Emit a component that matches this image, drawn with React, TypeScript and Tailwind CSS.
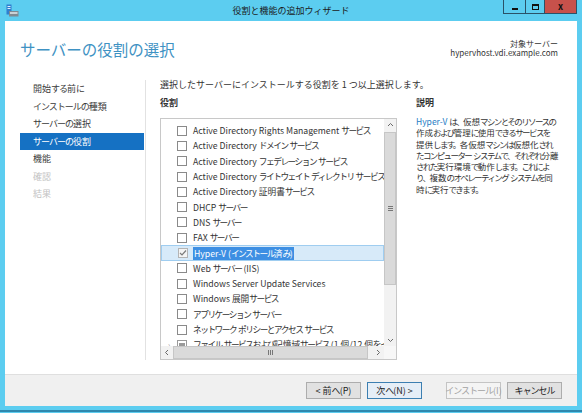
const roles: { label: string; state: "off" | "on" | "partial"; selected?: boolean; expander?: boolean }[] = [
  { label: "Active Directory Rights Management サービス", state: "off" },
  { label: "Active Directory ドメイン サービス", state: "off" },
  { label: "Active Directory フェデレーション サービス", state: "off" },
  { label: "Active Directory ライトウェイト ディレクトリ サービス", state: "off" },
  { label: "Active Directory 証明書サービス", state: "off" },
  { label: "DHCP サーバー", state: "off" },
  { label: "DNS サーバー", state: "off" },
  { label: "FAX サーバー", state: "off" },
  { label: "Hyper-V (インストール済み)", state: "on", selected: true },
  { label: "Web サーバー (IIS)", state: "off" },
  { label: "Windows Server Update Services", state: "off" },
  { label: "Windows 展開サービス", state: "off" },
  { label: "アプリケーション サーバー", state: "off" },
  { label: "ネットワーク ポリシーとアクセス サービス", state: "off" },
  { label: "ファイル サービスおよび記憶域サービス (1 個/12 個をインストール済み)", state: "partial", expander: true },
];

const steps: { label: string; active?: boolean; disabled?: boolean }[] = [
  { label: "開始する前に" },
  { label: "インストールの種類" },
  { label: "サーバーの選択" },
  { label: "サーバーの役割", active: true },
  { label: "機能" },
  { label: "確認", disabled: true },
  { label: "結果", disabled: true },
];

const descLines = [
  "作成および管理に使用できるサービスを",
  "提供します。各仮想マシンは仮想化され",
  "たコンピューター システムで、それぞれ分離",
  "された実行環境で動作します。これによ",
  "り、複数のオペレーティング システムを同",
  "時に実行できます。",
];

// the screenshot's UI font has narrow kana; squeeze only the kana runs
const tight = {
  list: "tracking-[-1.5px]",
  desc: "tracking-[-1.6px]",
  nav: "tracking-[-1px]",
};

function Jp({ text, fit }: { text: string; fit: keyof typeof tight }) {
  const parts = text.split(/([\u3000-\u30ff]+)/);
  return (
    <>
      {parts.map((p, i) =>
        i % 2 === 1 ? (
          <span key={i} className={tight[fit]}>
            {p}
          </span>
        ) : (
          p
        ),
      )}
    </>
  );
}

function AppIcon() {
  return (
    <svg width="13" height="13" viewBox="0 0 13 13">
      <rect x="0.5" y="0.5" width="5" height="10" fill="#2f7fcf" />
      <rect x="1.5" y="2" width="3" height="1" fill="#dff0ff" />
      <rect x="1.5" y="4" width="3" height="1" fill="#dff0ff" />
      <rect x="3" y="7" width="9.5" height="5.5" fill="#7f8a92" />
      <rect x="4" y="8" width="7.5" height="2" fill="#c9d1d6" />
    </svg>
  );
}

function Chevron({ dir }: { dir: "up" | "down" | "left" | "right" }) {
  const d = {
    up: "M1 4 L3.5 1.5 L6 4",
    down: "M1 2 L3.5 4.5 L6 2",
    left: "M4 1 L1.5 3.5 L4 6",
    right: "M2 1 L4.5 3.5 L2 6",
  }[dir];
  return (
    <svg width="7" height="7" viewBox="0 0 7 7">
      <path d={d} fill="none" stroke="#6a6a6a" strokeWidth="1" />
    </svg>
  );
}

function Checkbox({ state }: { state: "off" | "on" | "partial" }) {
  if (state === "on") {
    return (
      <span className="flex h-[10px] w-[10px] shrink-0 items-center justify-center border border-[#b4b4b4] bg-[#f4f4f4]">
        <svg width="8" height="8" viewBox="0 0 8 8">
          <path d="M1 4 L3 6 L7 1.5" fill="none" stroke="#7b7b7b" strokeWidth="1.2" />
        </svg>
      </span>
    );
  }
  if (state === "partial") {
    return (
      <span className="flex h-[10px] w-[10px] shrink-0 items-center justify-center border border-[#9a9a9a] bg-white">
        <span className="h-[4px] w-[6px] bg-[#9a9a9a]" />
      </span>
    );
  }
  return <span className="h-[10px] w-[10px] shrink-0 border border-[#8a8a8a] bg-white" />;
}

function Button({ children, kind }: { children: string; kind?: "default" | "disabled" }) {
  const tone =
    kind === "default"
      ? "border-[#3c7fb1] bg-[#e5eef7] text-[#222]"
      : kind === "disabled"
        ? "border-[#c4c4c4] bg-[#f4f4f4] text-[#a2a2a2]"
        : "border-[#adadad] bg-[#e1e1e1] text-[#222]";
  return (
    <div className={`flex h-[17px] w-[55px] items-center justify-center whitespace-pre border text-[9px] ${tone}`}>
      <Jp text={children} fit="nav" />
    </div>
  );
}

export default function App() {
  return (
    <div className="flex h-[413px] w-[582px] flex-col bg-[#5ccdf0] font-['Noto_Sans_CJK_JP',sans-serif] text-[#333]">
      {/* title bar */}
      <div className="grid h-[21px] shrink-0 grid-cols-[1fr_auto_1fr] px-[5px]">
        <div className="pl-[1px] pt-[4px]">
          <AppIcon />
        </div>
        <div className="self-center text-[9px] leading-none text-[#1b1b1b]">役割と機能の追加ウィザード</div>
        <div className="flex justify-end">
          <div className="flex h-[14px] border-x border-b border-[#2a5268]">
            <div className="flex w-[21px] items-end justify-center pb-[3px]">
              <span className="h-[2px] w-[6px] bg-[#111]" />
            </div>
            <div className="flex w-[19px] items-center justify-center border-l border-[#2a5268]">
              <span className="h-[6px] w-[7px] border border-t-2 border-[#111]" />
            </div>
            <div className="flex w-[32px] items-center justify-center border-l border-[#2a5268] bg-[#c7514b] text-[9px] font-bold leading-none text-[#111]">
              x
            </div>
          </div>
        </div>
      </div>

      {/* window body */}
      <div className="mx-[5px] flex h-[385px] shrink-0 flex-col bg-white">
        <div className="flex h-[58px] shrink-0 justify-between pl-[15px] pr-[19px] pt-[18px]">
          <div className="pt-[1px] text-[15.5px] leading-[18px] text-[#3f92c3]">サーバーの役割の選択</div>
          <div className="text-right text-[8px] leading-[9px] text-[#333]">
            <div>対象サーバー</div>
            <div>hypervhost.vdi.example.com</div>
          </div>
        </div>

        <div className="flex flex-1">
          <nav className="w-[140px] shrink-0 pl-[15px] pt-[1px]">
            {steps.map((s) => (
              <div
                key={s.label}
                className={`h-[17.5px] w-[124px] pl-[13px] text-[9px] leading-[17.5px] ${
                  s.active ? "bg-[#1571c3] text-white" : s.disabled ? "text-[#c3c3c3]" : "text-[#3a3a3a]"
                }`}
              >
                <Jp text={s.label} fit="nav" />
              </div>
            ))}
          </nav>
          <div className="mt-[1px] h-[280px] w-px bg-[#e2e2e2]" />

          <div className="flex flex-col pl-[14px]">
            <div className="text-[9px] leading-[12px] text-[#333]">
              選択したサーバーにインストールする役割を 1 つ以上選択します。
            </div>
            <div className="mt-[6px] flex">
              <div className="w-[237px]">
                <div className="text-[9px] font-bold leading-[12px] text-[#333]">役割</div>
                <div className="mt-[9px] flex h-[242px] flex-col border border-[#c8c8c8]">
                  <div className="flex h-[227px]">
                    <div className="flex-1 overflow-hidden pt-[4px]">
                      {roles.map((r) => (
                        <div
                          key={r.label}
                          className={`flex h-[15.3px] items-center whitespace-nowrap text-[8.7px] ${
                            r.selected ? "border border-[#9fcdf0] bg-[#d7eaf9]" : ""
                          }`}
                        >
                          <span className="flex w-[16px] shrink-0 justify-center text-[7px] leading-none text-[#999]">
                            {r.expander ? "›" : ""}
                          </span>
                          <Checkbox state={r.state} />
                          <span
                            className={`ml-[5px] px-[1px] leading-[13px] ${
                              r.selected ? "bg-[#3d8fe3] text-white" : "text-[#333]"
                            }`}
                          >
                            <Jp text={r.label} fit="list" />
                          </span>
                        </div>
                      ))}
                    </div>
                    <div className="flex w-[12px] shrink-0 flex-col bg-[#f2f2f2]">
                      <div className="flex h-[13px] items-center justify-center">
                        <Chevron dir="up" />
                      </div>
                      <div className="flex h-[153px] items-center justify-center border border-[#c6c6c6] bg-[#dadada]">
                        <div className="flex flex-col gap-[1px]">
                          <span className="h-px w-[5px] bg-[#777]" />
                          <span className="h-px w-[5px] bg-[#777]" />
                          <span className="h-px w-[5px] bg-[#777]" />
                        </div>
                      </div>
                      <div className="flex-1" />
                      <div className="flex h-[12px] items-center justify-center">
                        <Chevron dir="down" />
                      </div>
                    </div>
                  </div>
                  <div className="flex h-[13px] shrink-0 bg-[#f2f2f2]">
                    <div className="flex w-[12px] items-center justify-center">
                      <Chevron dir="left" />
                    </div>
                    <div className="mr-[4px] flex flex-1 items-center justify-center border border-[#c6c6c6] bg-[#dadada]">
                      <div className="flex gap-[1px]">
                        <span className="h-[5px] w-px bg-[#777]" />
                        <span className="h-[5px] w-px bg-[#777]" />
                        <span className="h-[5px] w-px bg-[#777]" />
                      </div>
                    </div>
                    <div className="flex w-[12px] items-center justify-center">
                      <Chevron dir="right" />
                    </div>
                    <div className="w-[12px] bg-[#f7f7f7]" />
                  </div>
                </div>
              </div>

              <div className="ml-[19px] w-[158px]">
                <div className="text-[9px] font-bold leading-[12px] text-[#333]">説明</div>
                <div className="mt-[7px] whitespace-nowrap text-[8.5px] leading-[11.3px] text-[#333]">
                  <div>
                    <span className="text-[#1e7cc4]">Hyper-V</span>{" "}
                    <Jp text="は、仮想マシンとそのリソースの" fit="desc" />
                  </div>
                  {descLines.map((l) => (
                    <div key={l}>
                      <Jp text={l} fit="desc" />
                    </div>
                  ))}
                </div>
              </div>
            </div>
          </div>
        </div>

        <div className="flex h-[32px] shrink-0 justify-end border-t border-[#dfdfdf] bg-[#f0f0f0] pr-[15px] pt-[7px]">
          <Button>{"< 前へ(P)"}</Button>
          <div className="ml-[6px]">
            <Button kind="default">{"次へ(N) >"}</Button>
          </div>
          <div className="ml-[24px]">
            <Button kind="disabled">インストール(I)</Button>
          </div>
          <div className="ml-[6px]">
            <Button>キャンセル</Button>
          </div>
        </div>
      </div>

      <div className="h-[4px] shrink-0" />
      <div className="h-[2px] shrink-0 bg-[#2f88ae]" />
    </div>
  );
}
